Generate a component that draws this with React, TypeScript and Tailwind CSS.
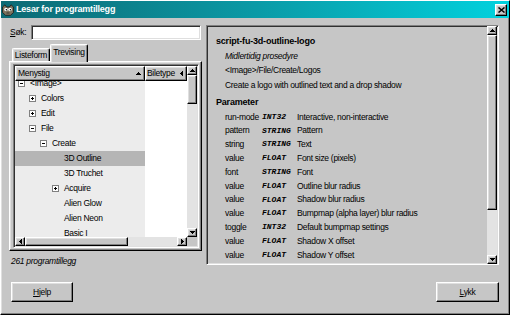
import React from "react";

const FONT = "font-['Liberation_Sans',Arial,sans-serif]";
const RAISED =
  "border border-t-white border-l-white border-r-black border-b-black shadow-[inset_-1px_-1px_0_#808080,inset_1px_1px_0_#dfdfdf]";
const SUNKEN =
  "border border-t-[#808080] border-l-[#808080] border-r-white border-b-white shadow-[inset_1px_1px_0_#303030,inset_-1px_-1px_0_#dfdfdf]";
const BG = "bg-[#c6c6c6]";
const BOLD = "font-bold text-[9px] tracking-[-0.2px]";

type Dir = "up" | "down" | "left" | "right";

function Tri({ dir }: { dir: Dir }) {
  if (dir === "up")
    return (
      <svg width="5" height="3" viewBox="0 0 5 3" shapeRendering="crispEdges">
        <rect x="2" y="0" width="1" height="1" fill="#000" />
        <rect x="1" y="1" width="3" height="1" fill="#000" />
        <rect x="0" y="2" width="5" height="1" fill="#000" />
      </svg>
    );
  if (dir === "down")
    return (
      <svg width="5" height="3" viewBox="0 0 5 3" shapeRendering="crispEdges">
        <rect x="0" y="0" width="5" height="1" fill="#000" />
        <rect x="1" y="1" width="3" height="1" fill="#000" />
        <rect x="2" y="2" width="1" height="1" fill="#000" />
      </svg>
    );
  if (dir === "left")
    return (
      <svg width="3" height="5" viewBox="0 0 3 5" shapeRendering="crispEdges">
        <rect x="0" y="2" width="1" height="1" fill="#000" />
        <rect x="1" y="1" width="1" height="3" fill="#000" />
        <rect x="2" y="0" width="1" height="5" fill="#000" />
      </svg>
    );
  return (
    <svg width="3" height="5" viewBox="0 0 3 5" shapeRendering="crispEdges">
      <rect x="0" y="0" width="1" height="5" fill="#000" />
      <rect x="1" y="1" width="1" height="3" fill="#000" />
      <rect x="2" y="2" width="1" height="1" fill="#000" />
    </svg>
  );
}

function ArrowBtn({ dir }: { dir: Dir }) {
  return (
    <div className={`${RAISED} ${BG} w-[10px] h-[9px] shrink-0 flex items-center justify-center`}>
      <Tri dir={dir} />
    </div>
  );
}

function VScroll({ thumbCls }: { thumbCls: string }) {
  return (
    <div className="w-[10px] shrink-0 flex flex-col">
      <ArrowBtn dir="up" />
      <div className={`${RAISED} ${BG} w-[10px] shrink-0 ${thumbCls}`} />
      <div className="flex-1 bg-[#e3e3e3]" />
      <ArrowBtn dir="down" />
    </div>
  );
}

function Expander({ open }: { open: boolean }) {
  return (
    <svg width="7" height="7" viewBox="0 0 7 7" shapeRendering="crispEdges" className="shrink-0">
      <rect x="0.5" y="0.5" width="6" height="6" fill="#fff" stroke="#808080" strokeWidth="1" />
      <rect x="2" y="3" width="3" height="1" fill="#000" />
      {!open && <rect x="3" y="2" width="1" height="3" fill="#000" />}
    </svg>
  );
}

type TreeItem = { label: string; lvl: string; exp?: "open" | "closed"; sel?: boolean };

const treeItems: TreeItem[] = [
  { label: "<Image>", lvl: "pl-[3px]", exp: "open" },
  { label: "Colors", lvl: "pl-[14px]", exp: "closed" },
  { label: "Edit", lvl: "pl-[14px]", exp: "closed" },
  { label: "File", lvl: "pl-[14px]", exp: "open" },
  { label: "Create", lvl: "pl-[25px]", exp: "open" },
  { label: "3D Outline", lvl: "pl-[37px]", sel: true },
  { label: "3D Truchet", lvl: "pl-[37px]" },
  { label: "Acquire", lvl: "pl-[37px]", exp: "closed" },
  { label: "Alien Glow", lvl: "pl-[37px]" },
  { label: "Alien Neon", lvl: "pl-[37px]" },
  { label: "Basic I", lvl: "pl-[37px]" },
];

const params: [string, string, string][] = [
  ["run-mode", "INT32", "Interactive, non-interactive"],
  ["pattern", "STRING", "Pattern"],
  ["string", "STRING", "Text"],
  ["value", "FLOAT", "Font size (pixels)"],
  ["font", "STRING", "Font"],
  ["value", "FLOAT", "Outline blur radius"],
  ["value", "FLOAT", "Shadow blur radius"],
  ["value", "FLOAT", "Bumpmap (alpha layer) blur radius"],
  ["toggle", "INT32", "Default bumpmap settings"],
  ["value", "FLOAT", "Shadow X offset"],
  ["value", "FLOAT", "Shadow Y offset"],
];

function Wilber() {
  return (
    <svg width="12" height="12" viewBox="0 0 12 12" className="shrink-0">
      <path d="M0.5 3 L3 0.8 L4.5 3 L7.5 3 L9 0.8 L11.5 3 L11.5 8.5 L8.5 11.3 L3.5 11.3 L0.5 8.5Z" fill="#7d735e" stroke="#1a1a1a" strokeWidth="0.8" />
      <circle cx="4" cy="5.5" r="1.8" fill="#fff" />
      <circle cx="8" cy="5.5" r="1.8" fill="#fff" />
      <circle cx="4.4" cy="5.8" r="0.8" fill="#000" />
      <circle cx="8.4" cy="5.8" r="0.8" fill="#000" />
      <path d="M4.5 9 L7.5 9" stroke="#2a2a2a" strokeWidth="0.8" />
    </svg>
  );
}

export default function App() {
  return (
    <div className={`${FONT} text-[8.5px] tracking-[-0.3px] leading-none text-black w-[510px] h-[315px] ${BG} ${RAISED} flex flex-col overflow-hidden`}>
      {/* Title bar */}
      <div className="h-[17px] shrink-0 flex items-center bg-linear-to-r from-[#0c6a74] via-[#0a9aa6] to-[#00d2de] pl-[1px] pr-[2px]">
        <Wilber />
        <span className={`ml-[2px] text-white ${BOLD}`}>Lesar for programtillegg</span>
        <div className="flex-1" />
        <div className={`${RAISED} ${BG} w-[12px] h-[12px] flex items-center justify-center`}>
          <svg width="7" height="6" viewBox="0 0 7 6">
            <path d="M0.5 0.5 L6.5 5.5 M6.5 0.5 L0.5 5.5" stroke="#000" strokeWidth="1.5" />
          </svg>
        </div>
      </div>

      {/* Main */}
      <div className="flex pl-[8px] pr-[8px] mt-[7px] shrink-0">
        {/* Left column */}
        <div className="w-[193px] flex flex-col">
          <div className="h-[15px] flex items-center">
            <span className="w-[22px] pl-[1px]">
              <span className="underline">S</span>øk:
            </span>
            <div className={`${SUNKEN} w-[170px] h-[15px] bg-white`} />
          </div>

          {/* Tabs */}
          <div className="h-[17px] mt-[4px] flex items-end pl-[3px]">
            <div className="w-[38px] h-[13px] border-t border-l border-t-white border-l-white border-r border-r-black rounded-tl-[2px] rounded-tr-[2px] shadow-[inset_-1px_0_0_#808080,inset_1px_1px_0_#dfdfdf] flex items-center justify-center whitespace-nowrap">
              Listeform
            </div>
            <div className={`relative z-10 -mb-[1px] w-[38px] h-[18px] ${BG} border-t border-l border-t-white border-l-white border-r border-r-black rounded-tl-[2px] rounded-tr-[2px] shadow-[inset_-1px_0_0_#808080,inset_1px_1px_0_#dfdfdf] flex items-center justify-center pb-[2px] whitespace-nowrap`}>
              Trevising
            </div>
          </div>

          {/* Tab panel */}
          <div className={`${RAISED} h-[190px] pl-[3px] pr-[2px] pt-[2px] pb-[2px]`}>
            <div className={`${SUNKEN} w-[186px] h-[184px] p-[1px] flex flex-col`}>
              <div className="flex h-[171px]">
                <div className="w-[172px] flex flex-col">
                  {/* Header */}
                  <div className="flex h-[15px] shrink-0">
                    <div className={`${RAISED} ${BG} w-[130px] flex items-center justify-between pl-[2px] pr-[3px]`}>
                      <span>Menystig</span>
                      <Tri dir="up" />
                    </div>
                    <div className={`${RAISED} ${BG} w-[42px] flex items-center justify-between pl-[1px] pr-[3px]`}>
                      <span className="whitespace-nowrap">Biletype</span>
                      <Tri dir="left" />
                    </div>
                  </div>
                  {/* Rows */}
                  <div className="h-[156px] overflow-hidden">
                    <div className="-mt-[5px]">
                      {treeItems.map((it, i) => (
                        <div key={i} className="flex h-[15px]">
                          <div className={`w-[130px] flex items-center ${it.lvl} ${it.sel ? "bg-[#b5b5b5]" : "bg-[#ececec]"}`}>
                            {it.exp ? <Expander open={it.exp === "open"} /> : <span className="w-[7px] shrink-0" />}
                            <span className="ml-[5px] whitespace-nowrap">{it.label}</span>
                          </div>
                          <div className="w-[42px] bg-white" />
                        </div>
                      ))}
                    </div>
                  </div>
                </div>
                <VScroll thumbCls="h-[29px]" />
              </div>
              {/* Horizontal scroll */}
              <div className="flex h-[9px]">
                <div className="w-[172px] flex">
                  <ArrowBtn dir="left" />
                  <div className={`${RAISED} ${BG} w-[103px] h-[9px]`} />
                  <div className="flex-1 bg-[#e3e3e3]" />
                  <ArrowBtn dir="right" />
                </div>
                <div className={`w-[10px] ${BG}`} />
              </div>
            </div>
          </div>

          <div className="h-[12px] mt-[4px] flex items-center pl-[2px] italic">261 programtillegg</div>
        </div>

        {/* Right panel */}
        <div className={`${SUNKEN} ml-[4px] w-[293px] h-[240px] flex pr-[1px]`}>
          <div className="flex-1 flex flex-col pl-[9px] pt-[8px]">
            <div className={`h-[14.5px] flex items-center ${BOLD}`}>script-fu-3d-outline-logo</div>
            <div className="h-[14.5px] flex items-center pl-[9px] italic">Midlertidig prosedyre</div>
            <div className="h-[14.5px] flex items-center pl-[9px]">&lt;Image&gt;/File/Create/Logos</div>
            <div className="h-[14.5px] flex items-center pl-[9px] whitespace-nowrap">Create a logo with outlined text and a drop shadow</div>
            <div className={`h-[14px] mt-[3px] flex items-center ${BOLD}`}>Parameter</div>
            <div className="mt-[1px] flex flex-col">
              {params.map(([n, t, d], i) => (
                <div key={i} className="h-[13.8px] flex items-center pl-[9px]">
                  <span className="w-[37px] shrink-0 whitespace-nowrap">{n}</span>
                  <span className="w-[35px] shrink-0 font-['Liberation_Mono',monospace] font-bold italic text-[8px] tracking-normal">{t}</span>
                  <span className="whitespace-nowrap">{d}</span>
                </div>
              ))}
            </div>
          </div>
          <VScroll thumbCls="h-[175px]" />
        </div>
      </div>

      {/* Footer */}
      <div className="flex justify-between px-[10px] mt-[15px] shrink-0">
        <div className={`${RAISED} ${BG} w-[62px] h-[20px] flex items-center justify-center`}>
          <span>
            <span className="underline">H</span>jelp
          </span>
        </div>
        <div className={`${RAISED} ${BG} w-[63px] h-[20px] flex items-center justify-center`}>
          <span>
            <span className="underline">L</span>ykk
          </span>
        </div>
      </div>
    </div>
  );
}
